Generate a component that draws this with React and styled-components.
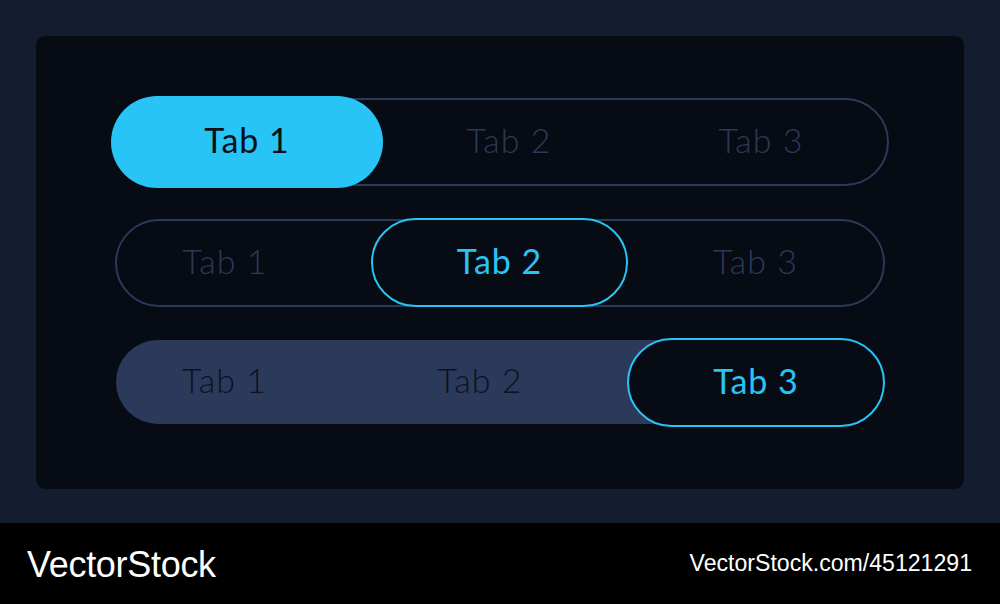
import React from "react";
import styled, { createGlobalStyle } from "styled-components";

const GlobalStyle = createGlobalStyle`
  html, body {
    margin: 0;
    padding: 0;
    background: #000;
  }
  * {
    box-sizing: border-box;
  }
`;

const cyan = "#27c4f5";
const slate = "#2a3a58";

const Page = styled.div`
  width: 1000px;
  height: 604px;
  display: flex;
  flex-direction: column;
  font-family: Lato, "Noto Sans", sans-serif;
`;

const Stage = styled.div`
  height: 523px;
  background: #141c2f;
  padding: 36px 36px 34px 36px;
`;

const Panel = styled.div`
  height: 453px;
  background: #070b13;
  border-radius: 9px;
  padding: 62px 0 0 79px;
  display: flex;
  flex-direction: column;
  gap: 33px;
`;

const Row = styled.div`
  display: grid;
  grid-template-columns: ${(p) => p.$cols};
  align-items: center;
  width: ${(p) => p.$width}px;
  height: ${(p) => p.$height}px;
  margin-left: ${(p) => p.$left || 0}px;
  border-radius: ${(p) => p.$height / 2}px;
  border: ${(p) => (p.$outlined ? `2px solid ${slate}` : "none")};
  background: ${(p) =>
    p.$fill ? `linear-gradient(to right, #2b3a5a 0 ${p.$fill}px, transparent ${p.$fill}px)` : "transparent"};
`;

const Tab = styled.div`
  display: flex;
  align-items: center;
  justify-content: center;
  height: 100%;
  font-size: 34px;
  font-weight: 300;
  letter-spacing: 1px;
  padding-bottom: 6px;
  color: ${(p) => p.$color || slate};
  padding-right: ${(p) => (p.$before ? 38 : 0)}px;
`;

const ActiveTab = styled.div`
  display: flex;
  align-items: center;
  justify-content: center;
  align-self: stretch;
  margin: ${(p) => p.$margin};
  border-radius: 48px;
  font-size: 34px;
  font-weight: 400;
  letter-spacing: 1px;
  padding-bottom: 5px;
  background: ${(p) => (p.$solid ? cyan : "#070b13")};
  border: ${(p) => (p.$solid ? "none" : `2px solid ${cyan}`)};
  color: ${(p) => (p.$solid ? "#0a0f18" : cyan)};
`;

const Footer = styled.div`
  height: 81px;
  background: #000;
  display: flex;
  align-items: center;
  justify-content: space-between;
  padding: 0 28px 0 27px;
  font-family: "Liberation Sans", Arial, sans-serif;
  color: #fff;
`;

const Brand = styled.div`
  font-size: 36px;
  letter-spacing: -0.3px;
  margin-top: 2px;
`;

const StockId = styled.div`
  font-size: 23.1px;
  letter-spacing: 0;
`;

export default function App() {
  return (
    <Page>
      <GlobalStyle />
      <Stage>
        <Panel>
          <Row $cols="266px 1fr 1fr" $width={774} $height={88} $outlined>
            <ActiveTab $solid $margin="-4px 0 -4px -6px">Tab 1</ActiveTab>
            <Tab>Tab 2</Tab>
            <Tab>Tab 3</Tab>
          </Row>
          <Row $cols="254px 257px 1fr" $width={770} $height={88} $outlined>
            <Tab $before>Tab 1</Tab>
            <ActiveTab $margin="-3px 0 -2px 0">Tab 2</ActiveTab>
            <Tab>Tab 3</Tab>
          </Row>
          <Row $cols="255px 256px 1fr" $width={769} $height={84} $left={1} $fill={544}>
            <Tab $before $color="#0b1220">Tab 1</Tab>
            <Tab $before $color="#0b1220">Tab 2</Tab>
            <ActiveTab $margin="-2px 0 -3px 0">Tab 3</ActiveTab>
          </Row>
        </Panel>
      </Stage>
      <Footer>
        <Brand>VectorStock</Brand>
        <StockId>VectorStock.com/45121291</StockId>
      </Footer>
    </Page>
  );
}
